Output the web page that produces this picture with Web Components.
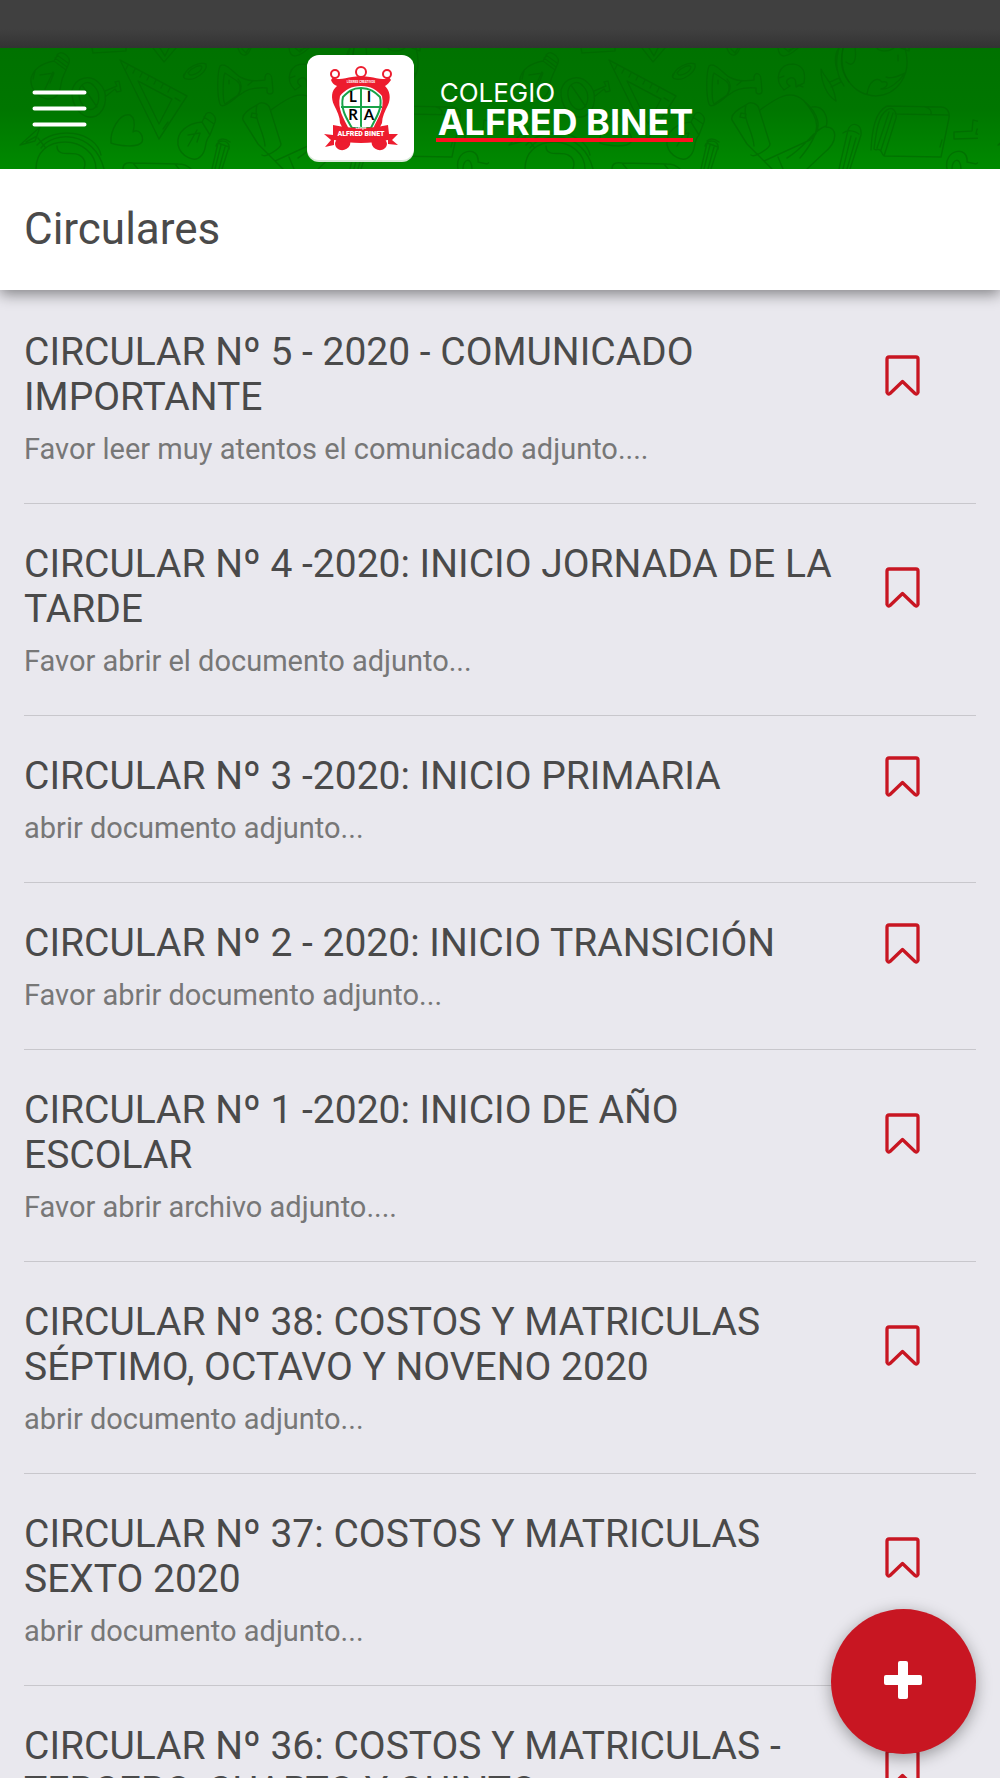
<!DOCTYPE html>
<html lang="es">
<head>
<meta charset="UTF-8">
<meta name="viewport" content="width=device-width, initial-scale=1.0">
<title>Circulares</title>
<style>
  body {
    margin: 0;
    background: #e9e8ee;
    color: #4a4a4a;
    font-family: Roboto, sans-serif;
    height: 100vh;
    overflow: hidden;
  }
</style>
</head>
<body>
<app-shell>
  <app-header slot="header"></app-header>
  <page-title slot="header">Circulares</page-title>
  <circular-item>CIRCULAR Nº 5 - 2020 - COMUNICADO IMPORTANTE<span slot="summary">Favor leer muy atentos el comunicado adjunto....</span></circular-item>
  <circular-item>CIRCULAR Nº 4 -2020: INICIO JORNADA DE LA TARDE<span slot="summary">Favor abrir el documento adjunto...</span></circular-item>
  <circular-item>CIRCULAR Nº 3 -2020: INICIO PRIMARIA<span slot="summary">abrir documento adjunto...</span></circular-item>
  <circular-item>CIRCULAR Nº 2 - 2020: INICIO TRANSICIÓN<span slot="summary">Favor abrir documento adjunto...</span></circular-item>
  <circular-item>CIRCULAR Nº 1 -2020: INICIO DE AÑO ESCOLAR<span slot="summary">Favor abrir archivo adjunto....</span></circular-item>
  <circular-item>CIRCULAR Nº 38: COSTOS Y MATRICULAS SÉPTIMO, OCTAVO Y NOVENO 2020<span slot="summary">abrir documento adjunto...</span></circular-item>
  <circular-item>CIRCULAR Nº 37: COSTOS Y MATRICULAS SEXTO 2020<span slot="summary">abrir documento adjunto...</span></circular-item>
  <circular-item>CIRCULAR Nº 36: COSTOS Y MATRICULAS - TERCERO, CUARTO Y QUINTO</circular-item>
  <add-button slot="fab"></add-button>
</app-shell>

<script>
class AppShell extends HTMLElement {
  connectedCallback() {
    this.attachShadow({ mode: 'open' });
    this.shadowRoot.innerHTML = `
      <style>
        :host {
          display: flex;
          flex-direction: column;
          height: 100%;
        }

        .status-bar {
          height: 48px;
          flex: none;
          background: linear-gradient(#404040 60%, #333);
        }

        header {
          flex: none;
          position: relative;
          z-index: 1;
          box-shadow: 0 4px 14px rgba(0, 0, 0, 0.45);
          clip-path: inset(0 0 -30px 0);
        }

        main {
          flex: 1;
          min-height: 0;
          overflow: hidden;
          padding: 2px 24px 0;
        }
      </style>
      <div class="status-bar"></div>
      <header><slot name="header"></slot></header>
      <main><slot></slot></main>
      <slot name="fab"></slot>
    `;
  }
}

class AppHeader extends HTMLElement {
  connectedCallback() {
    this.attachShadow({ mode: 'open' });
    this.shadowRoot.innerHTML = `
      <style>
        :host {
          display: grid;
          grid-template-columns: 1fr auto 1fr;
          align-items: center;
          height: 121px;
          background: linear-gradient(#007200, #007600 50%, #008a00);
          position: relative;
        }

        .doodles {
          position: absolute;
          inset: 0;
          width: 100%;
          height: 100%;
        }

        button {
          position: relative;
          justify-self: start;
          margin-left: 32px;
          padding: 0;
          border: 0;
          background: none;
          cursor: pointer;
        }

        button svg {
          display: block;
        }

        .brand {
          position: relative;
          display: flex;
          align-items: center;
          gap: 22px;
          color: white;
          text-decoration: none;
          font-family: Inter, sans-serif;
        }

        .crest {
          display: block;
        }

        .name {
          display: flex;
          flex-direction: column;
          padding-top: 4px;
        }

        .small {
          font-size: 26px;
          line-height: 28px;
          padding-left: 4px;
        }

        .big {
          font-size: 36px;
          line-height: 31px;
          font-weight: 700;
          padding-left: 2px;
          border-bottom: 4px solid #ff1020;
        }
      </style>
      <svg class="doodles" aria-hidden="true">
        <defs>
          <pattern id="school" width="489" height="121" patternUnits="userSpaceOnUse">
            <g fill="none" stroke="#006000" stroke-opacity="0.5" stroke-width="1.5" stroke-linejoin="round" stroke-linecap="round">
              <!-- bulb -->
              <path d="M54 13C43 15 34 20 31 30c-1 9 5 19 16 21c9 1 13-6 14-15c1-7 3-9 5-14zM54 13l4-7c4-4 13 3 11 9l-3 7M55 10l12 9M57 7l11 8M45 41l8-17M40 27l14-2l-4 10M35 23l-2 8"/>
              <!-- magnifier -->
              <path d="M72 42c4-13 18-16 27-7c10 9 8 27-3 33c-13 5-25-9-24-26zM79 43c2-9 10-11 15-5c7 7 6 19-1 23c-8 3-15-8-14-18zM105 43l12-5l-2-4l4-1l2 10l-4 1l-2-3l-10 8M82 37l15 22"/>
              <!-- globe -->
              <path d="M36 121C36 104 48 94 65 94s31 12 31 27M41 100c12-17 53-18 63 21M37 97c18-20 59-14 64 10M57 98c0 12 16 5 22 9c6 3 7 8 5 14M20 97l20-18l-5 14zM38 90l7 9M26 94l11-6"/>
              <!-- set square -->
              <path d="M120 12l67 36l-28 43zM138 33l34 18l-13 25zM128 17l-2 4M135 21l-2 4M142 25l-2 4M149 28l-2 4M156 32l-2 4M163 36l-2 4M170 40l-2 4M163 81l5-7M180 53l-5-3"/>
              <path d="M92 0l1 5l33-2V0M153 0l11 14L176 0M160 0l5 8l4-8"/>
              <!-- heart -->
              <path d="M111 95c-1-12 8-30 19-28c7 4 4 13 3 17c6-4 11 4 9 10c-4 6-23 4-31 1z"/>
              <!-- clip -->
              <path d="M184 28c2-8 15-15 22-12c2 8-12 17-19 15c-4 0-4-3-3-5M188 25c4-6 13-9 14-6c-1 6-12 10-13 7"/>
              <!-- second bulb -->
              <path d="M202 74c-13 1-26 9-24 23c3 12 17 18 23 11c7-7 2-13 9-21zM202 74l4-8c4-4 11 2 9 8l-5 13M204 69l10 7M188 98l9-16M188 87l12-2l-3 9"/>
              <!-- scroll and pencil -->
              <path d="M123 121c0-5 3-7 10-6l45 1c7 0 10 2 13 5M133 115l5 6M175 116l4 5M212 121l6-26l11 4l-7 22M216 98c1-7 15-7 13 3M218 93c4-4 8-2 12 1M221 97l-6 24M225 99l-6 22"/>
              <!-- flask -->
              <path d="M220 18c5-4 12 5 20 11c9 5 19 4 25 3c-1-9 7-8 7 0l1 11c0 4-6 4-6 0v-3c-15-1-22 2-29 8c-7 6-16 13-18 8c-3-8-3-30 0-38zM225 25l12 8c4 3 4 9 1 14l-13 9c-3-4-2-28 0-31zM238 31c4 4 4 10 1 15M229 32v4M248 37l5-4"/>
              <path d="M238 0c3 9 9 10 13 0M242 1l4 4l3-5M289 0c1 12 10 9 20 0M295 0l5 4l4-4M300 2l6-2"/>
              <!-- magnet -->
              <path d="M295 42c-11-11-5-26 9-26c10 1 13 8 11 19l-8 4c0-7-1-10-6-9c-5 2-4 6 0 8zM290 30l5-2M309 37l5 2"/>
              <!-- backpack -->
              <path d="M271 62c14-10 29-22 43-10c17 14 20 30 7 40l-46 21L258 96l-15-24c-2-6 8-12 14-15c4-5 12-1 13 4l11 35c0 4-15 14-19 11M257 57c-4 14 7 26 8 41M315 53c17 19 18 31-4 57M323 59c12-2 17 11 14 20c12 0 12 15-2 26l-17 16M337 78c-13 4-19 20-39 32M275 113l8 8M289 109l5 12M252 65l5 1l-1 4l-5-1z"/>
              <path d="M332 21c4 10 12 12 15 32C338 48 332 34 332 21zM341 34l9-4l2 4l-10 5M348 22c-3-10-1-18 2-22M355 38c-9-13-8-28-5-38M360 34c-8-10-9-20-6-34"/>
              <!-- big globe -->
              <path d="M354 0c-5 27 10 47 33 48c20-1 37-20 29-48M366 0c2 13-2 20-9 14M388 0c2 4 12 4 17 0M378 46c2-13 10-18 15-12c7-2 7 5-1 7c8 1 18-7 24-16c-8 4-15 6-19 4M409 7v6M412 0l8 3v-3"/>
              <path d="M350 121l9-39c3-9 14-7 13 5l-11 34M354 85c5-4 12-2 16 1M362 88l-8 33M367 90l-9 31"/>
              <!-- book -->
              <path d="M382 102c1-20 4-38 16-44l54 1c6 0 9 5 8 11l-8 39l-57-1l12-38c1-5-3-13-9-8c-9 5-11 24-13 39c3 3 5-4 9 6M406 66l54 1M436 59c5 1 7 4 6 8M388 100l12-36M392 102l12-37M453 92l-2 7"/>
              <!-- four and bell -->
              <path d="M465 84l18-1l1-11l15 4l-2 7l-9-2l-1 5l8 1v3l-30 1z M458 121c-4-20 22-24 20-7l9 2l3-2v7M463 121c0-11 9-12 9 0"/>
            </g>
          </pattern>
        </defs>
        <rect width="100%" height="100%" fill="url(#school)"/>
      </svg>
      <button type="button" aria-label="Menú">
        <svg width="55" height="37" viewBox="0 0 55 37">
          <path d="M2.500 2.500h50M2.500 18.500h50M2.500 34.500h50" stroke="#fff" stroke-width="4" stroke-linecap="round"/>
        </svg>
      </button>
      <a class="brand" href="#">
        <svg class="crest" width="107" height="107" viewBox="0 0 107 107" role="img" aria-label="Lira Alfred Binet">
          <rect y="1" width="107" height="106" rx="12" fill="#d8e8d8"/>
          <rect width="107" height="105" rx="12" fill="#fff"/>
          <path fill="#ed1c2e" d="M26 22c5 4 12 1 19 0c5-1 13-1 18 0c7 1 14 4 19 0l2 3c-2 3-4 5-6 6c5 5 6 12 3 19c-3 6-6 12-6 18l-4 8c2 5 9 8 9 13c-1 8-12 8-15 1c-1-5 0-9-3-14H46c-3 5-2 9-3 14c-3 7-14 7-15-1c0-5 7-8 9-13l-4-8c0-6-3-12-6-18c-3-7-3-14 3-19c-3-1-5-3-6-6z"/>
          <g fill="#fff" stroke="#ed1c2e" stroke-width="2">
            <circle cx="28" cy="19" r="4"/><circle cx="54" cy="17" r="5"/><circle cx="80" cy="19" r="4"/>
          </g>
          <path fill="#fff" d="M33 41c5-6 11-10 21-10s16 4 21 10c3 14-5 23-9 33H42c-5-10-12-20-9-33z"/>
          <path fill="none" stroke="#18a348" stroke-width="2" d="M36 42c5-5 9-9 18-9s14 4 19 9c3 12-5 22-9 31H45c-5-9-12-19-9-31zM54 33v40M34 52h41"/>
          <path fill="#ed1c2e" d="M17 79l9 1v-10c18 4 37 4 55 0l1 9h9l-6 6l6 5l-10-1v-4c-18 4-36 4-54 0v5l-9 2l6-7z"/>
          <g font-family="Lato, sans-serif" font-weight="700" font-size="15" text-anchor="middle">
            <text x="46" y="47">L</text><text x="62" y="47">I</text>
            <text x="46" y="65">R</text><text x="62" y="65">A</text>
          </g>
          <text x="54" y="28" fill="#fff" font-family="Roboto, sans-serif" font-weight="700" font-size="3" text-anchor="middle">LÍDERES CREATIVOS</text>
          <text x="54" y="74" fill="#fff" font-family="Roboto, sans-serif" font-weight="700" font-size="3" text-anchor="middle">Colegio</text>
          <text x="54" y="81" fill="#fff" font-family="Roboto, sans-serif" font-weight="900" font-size="7" text-anchor="middle">ALFRED BINET</text>
        </svg>
        <span class="name"><span class="small">COLEGIO</span><span class="big">ALFRED BINET</span></span>
      </a>
    `;
  }
}

class PageTitle extends HTMLElement {
  connectedCallback() {
    this.attachShadow({ mode: 'open' });
    this.shadowRoot.innerHTML = `
      <style>
        :host {
          display: block;
          background: white;
        }

        h1 {
          margin: 0;
          padding: 0 24px;
          font-size: 44px;
          line-height: 121px;
          font-weight: 400;
        }
      </style>
      <h1><slot></slot></h1>
    `;
  }
}

class CircularItem extends HTMLElement {
  connectedCallback() {
    this.attachShadow({ mode: 'open' });
    this.shadowRoot.innerHTML = `
      <style>
        :host {
          display: block;
          padding: 38px 0 34px;
          border-bottom: 1px solid #c8c7cc;
        }

        .row {
          display: flex;
          align-items: center;
        }

        h2 {
          flex: 1;
          margin: 0;
          font-size: 39px;
          line-height: 45px;
          font-weight: 400;
        }

        button {
          margin: 0 56px 0 40px;
          padding: 0;
          border: 0;
          background: none;
          color: #c81622;
          cursor: pointer;
        }

        svg {
          display: block;
        }

        p {
          margin: 9px 0 0;
          font-size: 29px;
          line-height: 40px;
          color: #777;
        }
      </style>
      <div class="row">
        <h2><slot></slot></h2>
        <button type="button" aria-label="Marcar">
          <svg width="35" height="41" viewBox="0 0 35 41">
            <path d="M2 4Q2 2 4 2h27Q33 2 33 4V37.500Q32 40 30 38.500L17.500 26.500L5 38.500Q3 40 2 37.500z" fill="none" stroke="currentColor" stroke-width="3.300" stroke-linejoin="round"/>
          </svg>
        </button>
      </div>
      <p><slot name="summary"></slot></p>
    `;
  }
}

class AddButton extends HTMLElement {
  connectedCallback() {
    this.attachShadow({ mode: 'open' });
    this.shadowRoot.innerHTML = `
      <style>
        :host {
          position: fixed;
          right: 24px;
          bottom: 24px;
          z-index: 2;
        }

        button {
          display: grid;
          place-items: center;
          width: 145px;
          height: 145px;
          padding: 0 2px 4px 0;
          border: 0;
          border-radius: 50%;
          background: #c81622;
          box-shadow: 0 4px 16px rgba(0, 0, 0, 0.35);
          cursor: pointer;
        }
      </style>
      <button type="button" aria-label="Agregar">
        <svg width="38" height="38" viewBox="0 0 38 38" fill="#fff">
          <rect x="14" width="10" height="38" rx="2"/>
          <rect y="14" width="38" height="10" rx="2"/>
        </svg>
      </button>
    `;
  }
}

customElements.define('app-shell', AppShell);
customElements.define('app-header', AppHeader);
customElements.define('page-title', PageTitle);
customElements.define('circular-item', CircularItem);
customElements.define('add-button', AddButton);
</script>
</body>
</html>
